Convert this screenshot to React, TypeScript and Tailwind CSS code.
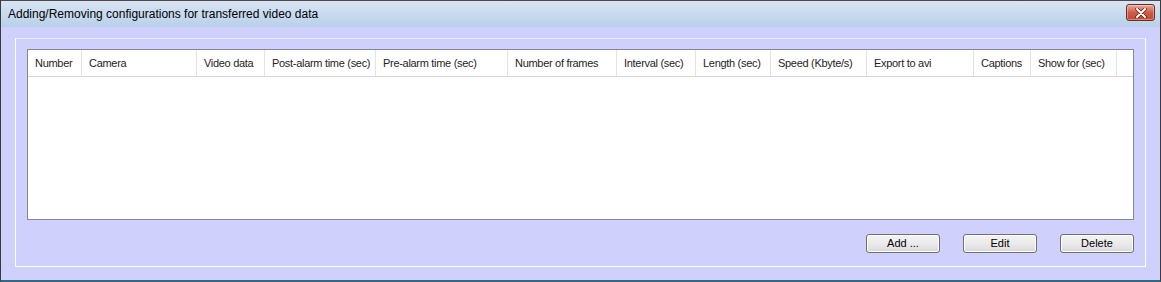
const columns = [
  { label: "Number", w: 54 },
  { label: "Camera", w: 115 },
  { label: "Video data", w: 68 },
  { label: "Post-alarm time (sec)", w: 111 },
  { label: "Pre-alarm time (sec)", w: 132 },
  { label: "Number of frames", w: 109 },
  { label: "Interval (sec)", w: 79 },
  { label: "Length (sec)", w: 75 },
  { label: "Speed (Kbyte/s)", w: 96 },
  { label: "Export to avi", w: 107 },
  { label: "Captions", w: 57 },
  { label: "Show for (sec)", w: 86 },
];

const WinButton = ({ children }: { children: React.ReactNode }) => (
  <button className="w-[74px] h-[19px] rounded-[3px] border border-[#707070] bg-gradient-to-b from-[#f3f3f3] via-[#ebebeb] to-[#d9d9d9] text-[11px] leading-none text-black shadow-[inset_0_0_0_1px_#fcfcfc]">
    {children}
  </button>
);

export default function App() {
  return (
    <div className="w-[1161px] h-[282px] flex flex-col border-x border-[#3b3b3b] border-b-2 border-b-[#2e6a80] bg-[#d0d0fc] font-['Liberation_Sans',Arial,sans-serif] text-black">
      <div className="h-[27px] shrink-0 flex items-center justify-between pl-[7px] pr-[5px] bg-gradient-to-b from-[#d8e5f4] to-[#b9d0ea] border-t border-[#4a4a4a]">
        <span className="text-[12px]">Adding/Removing configurations for transferred video data</span>
        <button className="mt-[-3px] w-[29px] h-[17px] rounded-[3px] border border-[#6d2a1f] bg-gradient-to-b from-[#e6a99c] via-[#cc5d47] to-[#c24a33] flex items-center justify-center shadow-[inset_0_0_0_1px_rgba(255,255,255,0.35)]">
          <svg width="12" height="10" viewBox="0 0 12 10">
            <path d="M2 1 L10 9 M10 1 L2 9" stroke="#5a1d14" strokeWidth="3.4" strokeLinecap="round" />
            <path d="M2 1 L10 9 M10 1 L2 9" stroke="#ffffff" strokeWidth="2" strokeLinecap="round" />
          </svg>
        </button>
      </div>
      <div className="flex-1 pt-[11px] pl-[14px] pr-[14px] pb-[13px]">
        <div className="h-full flex flex-col border border-white border-t-[#e8e8f8] pt-[10px] pl-[11px] pr-[11px]">
          <div className="h-[171px] border border-[#828790] bg-white">
            <div className="flex h-[27px] border-b border-[#d5d5d5] text-[11px] tracking-[-0.3px] text-[#1e1e1e]">
              {columns.map((c) => (
                <div
                  key={c.label}
                  style={{ width: c.w }}
                  className="shrink-0 flex items-center pl-[7px] border-r border-[#e3e3e3] whitespace-nowrap overflow-hidden"
                >
                  {c.label}
                </div>
              ))}
              <div className="flex-1" />
            </div>
          </div>
          <div className="flex justify-end gap-[23px] mt-[14px]">
            <WinButton>Add ...</WinButton>
            <WinButton>Edit</WinButton>
            <WinButton>Delete</WinButton>
          </div>
        </div>
      </div>
    </div>
  );
}
